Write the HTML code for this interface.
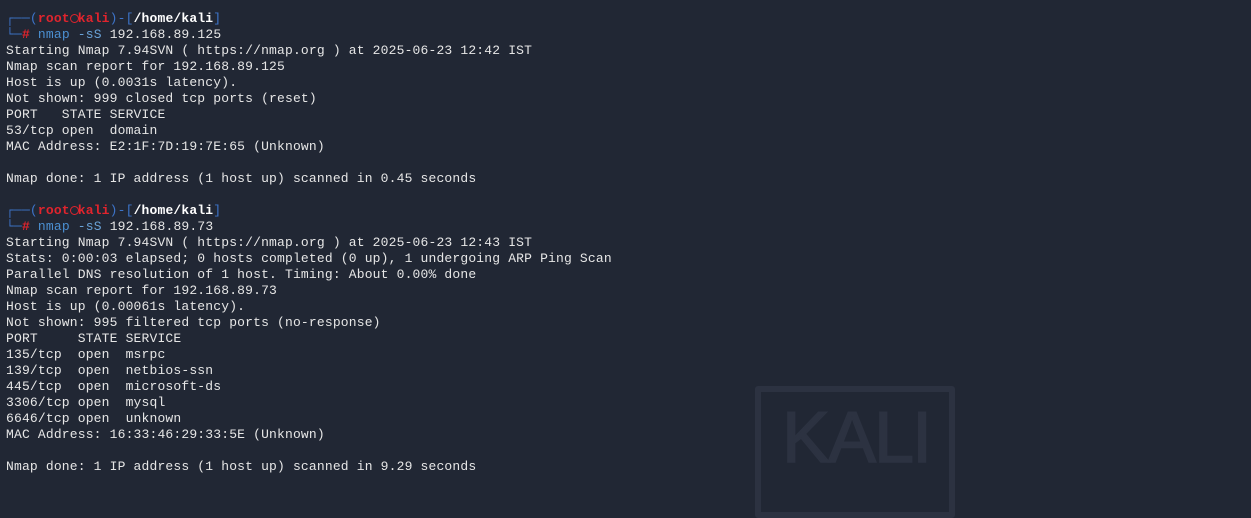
<!DOCTYPE html>
<html><head><meta charset="utf-8"><style>
html,body{margin:0;padding:0;width:1251px;height:482px;overflow:hidden;background:#212734;}
pre{margin:0;padding:11px 0 0 6px;font-family:"Liberation Mono",monospace;font-size:13px;letter-spacing:0.17px;line-height:16px;color:#e6e6e6;position:relative;z-index:2;}
.b{color:#3d74c9}.r{color:#e0242d;font-weight:bold}.w{color:#fff;font-weight:bold}.c{color:#4b8fd1}.s{color:#6aa3d8}.h{color:#e0242d;font-weight:bold}
.sk{display:inline-block;width:7.97px;text-align:center;}
.sk i{display:inline-block;width:9px;height:9px;border:1.5px solid #e0242d;border-radius:50%;box-sizing:border-box;vertical-align:-1px;}
.box{position:absolute;left:755px;top:386px;width:188px;height:120px;border:6px solid #2c3241;border-radius:3px;z-index:1}
.kali{position:absolute;left:782px;top:397px;font-family:"Liberation Sans",sans-serif;font-size:72px;color:#2c3241;z-index:1;letter-spacing:-2px;-webkit-text-stroke:1.5px #2c3241}
</style></head><body>
<div class="box"></div><div class="kali">KALI</div>
<pre><span class="b">┌──(</span><span class="r">root<span class="sk"><i></i></span>kali</span><span class="b">)-[</span><span class="w">/home/kali</span><span class="b">]</span>
<span class="b">└─</span><span class="h">#</span> <span class="c">nmap</span> <span class="s">-sS</span> 192.168.89.125
Starting Nmap 7.94SVN ( https://nmap.org ) at 2025-06-23 12:42 IST
Nmap scan report for 192.168.89.125
Host is up (0.0031s latency).
Not shown: 999 closed tcp ports (reset)
PORT   STATE SERVICE
53/tcp open  domain
MAC Address: E2:1F:7D:19:7E:65 (Unknown)

Nmap done: 1 IP address (1 host up) scanned in 0.45 seconds

<span class="b">┌──(</span><span class="r">root<span class="sk"><i></i></span>kali</span><span class="b">)-[</span><span class="w">/home/kali</span><span class="b">]</span>
<span class="b">└─</span><span class="h">#</span> <span class="c">nmap</span> <span class="s">-sS</span> 192.168.89.73
Starting Nmap 7.94SVN ( https://nmap.org ) at 2025-06-23 12:43 IST
Stats: 0:00:03 elapsed; 0 hosts completed (0 up), 1 undergoing ARP Ping Scan
Parallel DNS resolution of 1 host. Timing: About 0.00% done
Nmap scan report for 192.168.89.73
Host is up (0.00061s latency).
Not shown: 995 filtered tcp ports (no-response)
PORT     STATE SERVICE
135/tcp  open  msrpc
139/tcp  open  netbios-ssn
445/tcp  open  microsoft-ds
3306/tcp open  mysql
6646/tcp open  unknown
MAC Address: 16:33:46:29:33:5E (Unknown)

Nmap done: 1 IP address (1 host up) scanned in 9.29 seconds</pre>
</body></html>
